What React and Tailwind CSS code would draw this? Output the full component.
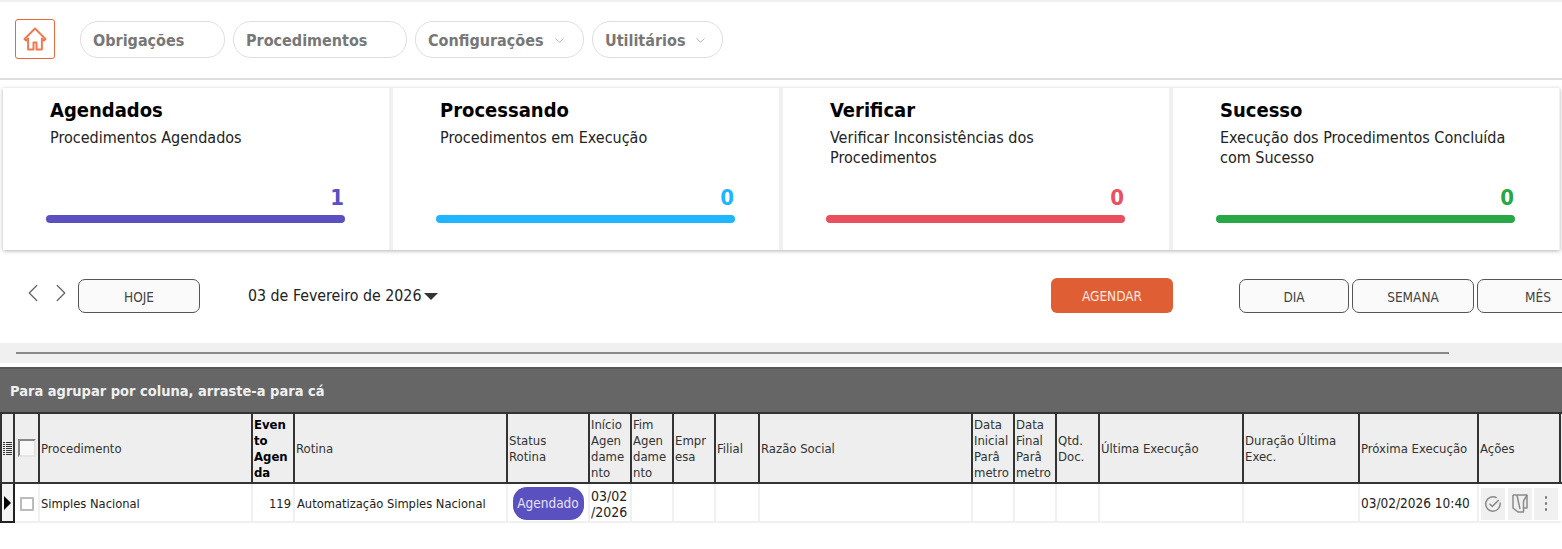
import React from "react";
import { ChevronDown, ChevronLeft, ChevronRight } from "lucide-react";

const cards = [
  { title: "Agendados", text: "Procedimentos Agendados", value: 1, color: "text-[#5a50c0]", bar: "bg-[#5a50c0]" },
  { title: "Processando", text: "Procedimentos em Execução", value: 0, color: "text-[#1fb6ff]", bar: "bg-[#1fb6ff]" },
  { title: "Verificar", text: "Verificar Inconsistências dos Procedimentos", value: 0, color: "text-[#ea4e5f]", bar: "bg-[#ea4e5f]" },
  { title: "Sucesso", text: "Execução dos Procedimentos Concluída com Sucesso", value: 0, color: "text-[#28a745]", bar: "bg-[#28a745]" },
];

const columns = [
  { key: "proc", label: "Procedimento" },
  { key: "evento", bold: true, label: <>Even<wbr />to Agen<wbr />da</> },
  { key: "rotina", label: "Rotina" },
  { key: "status", label: <>Status<br />Rotina</> },
  { key: "inicio", label: <>Início Agen<wbr />dame<wbr />nto</> },
  { key: "fim", label: <>Fim Agen<wbr />dame<wbr />nto</> },
  { key: "empresa", label: <>Empr<wbr />esa</> },
  { key: "filial", label: "Filial" },
  { key: "razao", label: "Razão Social" },
  { key: "dataIni", label: <>Data Inicial Parâ<wbr />metro</> },
  { key: "dataFim", label: <>Data Final Parâ<wbr />metro</> },
  { key: "qtd", label: "Qtd. Doc." },
  { key: "ultima", label: "Última Execução" },
  { key: "duracao", label: "Duração Última Exec." },
  { key: "proxima", label: "Próxima Execução" },
  { key: "acoes", label: "Ações" },
];

const headerCols = "grid-cols-[13px_25px_213px_42px_213px_82px_42px_42px_42px_44px_213px_42px_42px_43px_144px_116px_119px_82px]";
const rowCols = "grid-cols-[15px_25px_213px_42px_213px_82px_42px_42px_42px_44px_213px_42px_42px_43px_144px_116px_119px_82px]";

const HeaderCell = ({ children, bold }) => (
  <div className={`flex items-center border-r-2 border-[#333] pl-px pt-px text-[13px] leading-4 ${bold ? "font-bold text-black" : "text-[#333]"}`}>
    <span className="min-w-0">{children}</span>
  </div>
);

const RowCell = ({ children, className = "" }) => (
  <div className={`flex items-center border-b-2 border-r-2 border-[#f0f0f0] pt-[2px] text-[12.8px] text-[#222] ${className}`}>{children}</div>
);

const NavPill = ({ label, width, chevron }) => (
  <button className={`flex h-[37px] ${width} items-center gap-[8px] rounded-[18px] border border-[#dedede] bg-white pl-[12px] pt-[3px] text-[16px] font-bold text-[#777]`}>
    {label}
    {chevron && <ChevronDown size={15} strokeWidth={1} className="text-[#888]" />}
  </button>
);

const ViewButton = ({ label, width }) => (
  <button className={`mt-px h-[34px] ${width} shrink-0 rounded-[7px] border border-[#555] bg-[#fafafa] pt-[2px] text-[13.5px] text-[#444]`}>{label}</button>
);

const App = () => {
  return (
    <div className="h-[549px] overflow-hidden bg-white font-['DejaVu_Sans_Condensed','DejaVu_Sans',sans-serif]">
      <div className="h-[2px] bg-[#f0f0f0]" />
      <nav className="flex h-[78px] items-center gap-2 border-b-2 border-[#dddddd] pb-[2px] pl-[15px]">
        <button className="mr-[17px] flex h-[40px] w-[40px] items-center justify-center rounded-[3px] border border-[#e8673f] text-[#ef7a50]">
          <svg width="26" height="26" viewBox="0 0 26 26" fill="none" stroke="currentColor" strokeWidth="2" strokeLinejoin="round">
            <path d="M13 2.5 2.5 13l1.6 1.6 2-2V23.500h5.4v-7h3v7h5.400V12.600l2 2 1.600-1.600z" />
          </svg>
        </button>
        <NavPill label="Obrigações" width="w-[145px]" />
        <NavPill label="Procedimentos" width="w-[174px]" />
        <NavPill label="Configurações" width="w-[169px]" chevron />
        <NavPill label="Utilitários" width="w-[131px]" chevron />
      </nav>

      <section className="ml-[3px] mr-[2px] mt-2 flex h-[162px] gap-1 bg-[#f0f0f0] shadow-[0_1px_4px_rgba(0,0,0,0.3)]">
        {cards.map((card) => (
          <div key={card.title} className="flex w-[386px] flex-col bg-white pl-[43px] pt-[8px]">
            <div className="pl-1">
              <h2 className="text-[20px] font-bold leading-7 text-black">{card.title}</h2>
              <p className="mt-[4px] h-[40px] w-[300px] text-[16px] leading-5 text-[#222]">{card.text}</p>
            </div>
            <div className={`mt-[18px] w-[299px] pr-px text-right text-[22px] font-bold leading-6 ${card.color}`}>{card.value}</div>
            <div className={`mt-[5px] h-2 w-[299px] rounded-full ${card.bar}`} />
          </div>
        ))}
      </section>

      <section className="flex h-[93px] items-start pl-[18px] pt-[28px]">
        <div className="flex h-[30px] w-[60px] shrink-0 items-center text-[#666]">
          <ChevronLeft size={30} strokeWidth={1} />
          <ChevronRight size={30} strokeWidth={1} className="-ml-[2px]" />
        </div>
        <ViewButton label="HOJE" width="w-[122px]" />
        <div className="ml-[48px] flex h-[35px] w-[803px] shrink-0 items-center gap-[3px] pt-px text-[15.8px] text-[#222]">
          03 de Fevereiro de 2026
          <span className="h-0 w-0 border-x-[7.5px] border-t-[7px] border-x-transparent border-t-[#333]" />
        </div>
        <button className="h-[35px] w-[122px] shrink-0 rounded-[6px] bg-[#df5e33] pt-[2px] text-[13.5px] text-[#fde8e0]">AGENDAR</button>
        <div className="ml-[66px] flex shrink-0 gap-[3px]">
          <ViewButton label="DIA" width="w-[110px]" />
          <ViewButton label="SEMANA" width="w-[122px]" />
          <ViewButton label="MÊS" width="w-[122px]" />
        </div>
      </section>

      <div className="flex h-[20px] items-center bg-[#f0f0f0] pl-4">
        <div className="h-[2px] w-[1433px] bg-[#888888]" />
      </div>

      <section className="mt-[4px]">
        <div className="flex h-[45px] items-center border-t-2 border-[#555] bg-[#666666] pl-[10px] pt-[2px] text-[14.500px] font-bold text-[#f0f0f0]">
          Para agrupar por coluna, arraste-a para cá
        </div>

        <div className={`grid h-[72px] ${headerCols} border-y-2 border-l-2 border-[#333] bg-[#eeeeee]`}>
          <div className="flex items-center justify-center border-r-2 border-[#333]">
            <svg width="9" height="13" viewBox="0 0 9 13" fill="#333">
              <path d="M0 0h2v1H0zM3 0h6v1H3zM0 2h2v1H0zM3 2h6v1H3zM0 4h2v1H0zM3 4h6v1H3zM0 6h2v1H0zM3 6h6v1H3zM0 8h2v1H0zM3 8h6v1H3zM0 10h2v1H0zM3 10h6v1H3zM0 12h2v1H0zM3 12h6v1H3z" />
            </svg>
          </div>
          <div className="flex items-center justify-center border-r-2 border-[#333]">
            <span className="h-[18px] w-[18px] border-2 border-b-[#e4e4e4] border-l-[#888] border-r-[#e4e4e4] border-t-[#888] bg-[#f7f7f7]" />
          </div>
          {columns.map((col) => (
            <HeaderCell key={col.key} bold={col.bold}>{col.label}</HeaderCell>
          ))}
        </div>

        <div className={`grid h-[38px] ${rowCols}`}>
          <div className="flex h-[39px] items-center justify-center border-x-2 border-b-2 border-[#222] bg-[#f3f3f3]">
            <span className="h-0 w-0 border-y-[7px] border-l-[7px] border-y-transparent border-l-black" />
          </div>
          <RowCell className="justify-center">
            <span className="h-[14px] w-[14px] rounded-[1px] border-2 border-[#bbbbbb] bg-white" />
          </RowCell>
          <RowCell className="pl-px">Simples Nacional</RowCell>
          <RowCell className="justify-end pr-[2px]">119</RowCell>
          <RowCell className="pl-[2px]">Automatização Simples Nacional</RowCell>
          <RowCell className="justify-center">
            <span className="flex h-[33px] w-[71px] items-center justify-center rounded-[14px] bg-[#5a50c0] text-[13.500px] text-[#e4e2f6]">Agendado</span>
          </RowCell>
          <RowCell className="pl-px text-[14px] leading-4">
            <span className="min-w-0">03/02<wbr />/2026</span>
          </RowCell>
          <RowCell />
          <RowCell />
          <RowCell />
          <RowCell />
          <RowCell />
          <RowCell />
          <RowCell />
          <RowCell />
          <RowCell />
          <RowCell className="pl-px text-[13.500px]">03/02/2026 10:40</RowCell>
          <div className="flex items-center gap-[2.500px] border-b-2 border-[#f0f0f0] pl-[2px] pt-[2px]">
            <span className="flex h-[32px] w-[24px] items-center justify-center bg-[#f0f0f0] text-[#8a8a8a]">
              <svg width="18" height="18" viewBox="0 0 18 18" fill="none" stroke="currentColor" strokeWidth="1.500">
                <path d="M16 7.500A7.200 7.200 0 1 1 12.700 2.800" />
                <path d="M5.500 8.800 8.300 11.400 14.800 5" />
              </svg>
            </span>
            <span className="flex h-[32px] w-[24px] items-center justify-center bg-[#f0f0f0] text-[#8a8a8a]">
              <svg width="16" height="19" viewBox="0 0 16 19" fill="none" stroke="currentColor" strokeWidth="1.500" strokeLinejoin="round">
                <path d="M1 1h14v13h-3.500M1 1v13l5 4h5.500V7" />
                <path d="M5 1l1 5 2 9M11.500 7 15 1" />
              </svg>
            </span>
            <span className="flex h-[32px] w-[24px] flex-col items-center justify-center gap-[3.500px] bg-[#f0f0f0]">
              <span className="h-[2.500px] w-[2.500px] rounded-full bg-[#777]" />
              <span className="h-[2.500px] w-[2.500px] rounded-full bg-[#777]" />
              <span className="h-[2.500px] w-[2.500px] rounded-full bg-[#777]" />
            </span>
          </div>
        </div>
      </section>
    </div>
  );
};

export default App;
